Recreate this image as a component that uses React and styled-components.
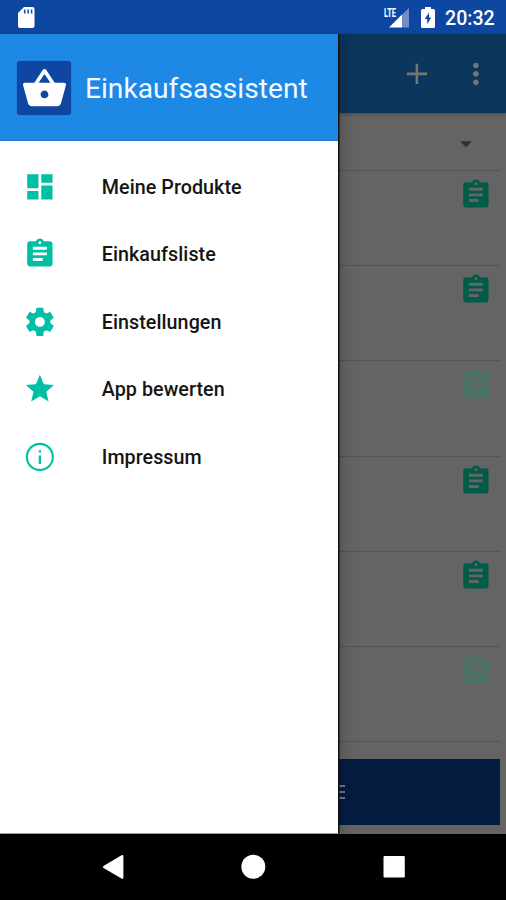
import React from "react";
import styled, { createGlobalStyle } from "styled-components";

const GlobalStyle = createGlobalStyle`
  *, *::before, *::after { box-sizing: border-box; }
  body { margin: 0; background: #000; font-family: Roboto, sans-serif; }
  svg { display: block; flex: none; }
`;

const Screen = styled.div`
  width: 506px;
  height: 900px;
  display: flex;
  flex-direction: column;
  overflow: hidden;
`;

const StatusBar = styled.header`
  height: 34px;
  flex: none;
  display: flex;
  align-items: center;
  padding: 0 11px 0 18px;
  background: #0d47a1;
  color: #fff;
`;

const StatusGroup = styled.div`
  display: flex;
  align-items: center;
  margin-left: auto;
`;

const Clock = styled.span`
  width: 50px;
  margin-left: 10px;
  padding-top: 3px;
  font-size: 19.6px;
  line-height: 24px;
  font-weight: 500;
  white-space: nowrap;
`;

const Stage = styled.main`
  position: relative;
  height: 799.5px;
  flex: none;
`;

const Page = styled.section`
  height: 100%;
  display: flex;
  flex-direction: column;
  background: #646464;
`;

const AppBar = styled.div`
  height: 79px;
  flex: none;
  display: flex;
  align-items: center;
  justify-content: flex-end;
  gap: 26px;
  padding-right: 13px;
  background: #0c365c;
  color: #737577;
  box-shadow: 0 1px 4px rgba(0, 0, 0, 0.3);
`;

const FilterRow = styled.div`
  height: 58px;
  flex: none;
  display: flex;
  align-items: center;
  justify-content: flex-end;
  margin-right: 6px;
  padding: 4px 17px 0 0;
  border-bottom: 1px solid #535353;
  color: #303030;
`;

const ProductRow = styled.div`
  height: 95.2px;
  flex: none;
  display: flex;
  justify-content: flex-end;
  margin-right: 6px;
  padding: 7px 7px 0 0;
  border-bottom: 1px solid #535353;
  color: ${(p) => (p.$listed ? "#005c48" : "#4a7267")};
`;

const ActionButton = styled.div`
  height: 66.5px;
  flex: none;
  display: flex;
  align-items: center;
  margin: 16.5px 6px 0;
  padding-left: 317px;
  background: #051c41;
  color: #727982;
`;

const Drawer = styled.aside`
  position: absolute;
  top: 0;
  left: 0;
  width: 338px;
  height: 100%;
  background: #fff;
  box-shadow: 1.5px 0 0 #111, 2px 0 14px rgba(0, 0, 0, 0.28);
  clip-path: inset(0 -30px 0 0);
`;

const DrawerHeader = styled.div`
  height: 107px;
  display: flex;
  align-items: center;
  gap: 14px;
  padding: 2px 0 0 17px;
  background: #1e88e5;
  border-bottom: 1px solid #1878d2;
`;

const AppLogo = styled.div`
  width: 54px;
  height: 54px;
  display: flex;
  align-items: center;
  justify-content: center;
  border-radius: 3px;
  background: #0d47a1;
  color: #fff;
  box-shadow: 0 0 1px #0d47a1;
`;

const Title = styled.h1`
  margin: 0;
  padding-top: 2px;
  font-size: 28.2px;
  line-height: 36px;
  font-weight: 400;
  color: #f1f8ff;
  white-space: nowrap;
`;

const Menu = styled.nav`
  padding-top: 12px;
`;

const MenuItem = styled.a`
  height: 67.5px;
  display: flex;
  align-items: center;
  gap: 45px;
  padding-left: 23px;
  color: #00bfa5;
`;

const MenuLabel = styled.span`
  padding-top: 2px;
  font-size: 19.7px;
  line-height: 26px;
  font-weight: 500;
  letter-spacing: 0.06px;
  color: #151515;
`;

const NavigationBar = styled.footer`
  flex: 1;
  display: flex;
  align-items: center;
  justify-content: space-between;
  padding: 0 96px;
  background: #000;
  color: #fff;
`;

const icons = {
  dashboard: "M3 13h8V3H3v10zm0 8h8v-6H3v6zm10 0h8V11h-8v10zm0-18v6h8V3h-8z",
  assignment:
    "M19 3h-4.18C14.4 1.84 13.3 1 12 1c-1.3 0-2.4.84-2.82 2H5c-1.1 0-2 .9-2 2v14c0 1.1.9 2 2 2h14c1.1 0 2-.9 2-2V5c0-1.1-.9-2-2-2zm-7 0c.55 0 1 .45 1 1s-.45 1-1 1-1-.45-1-1 .45-1 1-1zm2 14H7v-2h7v2zm3-4H7v-2h10v2zm0-4H7V7h10v2z",
  settings:
    "M19.43 12.98c.04-.32.07-.64.07-.98s-.03-.66-.07-.98l2.11-1.65c.19-.15.24-.42.12-.64l-2-3.46c-.12-.22-.39-.3-.61-.22l-2.49 1c-.52-.4-1.08-.73-1.69-.98l-.38-2.65C14.46 2.18 14.25 2 14 2h-4c-.25 0-.46.18-.49.42l-.38 2.65c-.61.25-1.17.59-1.69.98l-2.49-1c-.23-.09-.49 0-.61.22l-2 3.46c-.13.22-.07.49.12.64l2.11 1.65c-.04.32-.07.65-.07.98s.03.66.07.98l-2.11 1.65c-.19.15-.24.42-.12.64l2 3.46c.12.22.39.3.61.22l2.49-1c.52.4 1.08.73 1.69.98l.38 2.65c.03.24.24.42.49.42h4c.25 0 .46-.18.49-.42l.38-2.65c.61-.25 1.17-.59 1.69-.98l2.49 1c.23.09.49 0 .61-.22l2-3.46c.12-.22.07-.49-.12-.64l-2.11-1.65zM12 15.5c-1.93 0-3.5-1.57-3.5-3.5s1.57-3.5 3.5-3.5 3.5 1.57 3.5 3.5-1.57 3.5-3.5 3.5z",
  star: "M12 17.27L18.18 21l-1.64-7.03L22 9.24l-7.19-.61L12 2 9.19 8.63 2 9.24l5.46 4.73L5.82 21z",
  info: "M11.200 17h1.600v-6h-1.600zM12 2C6.480 2 2 6.480 2 12s4.480 10 10 10 10-4.480 10-10S17.520 2 12 2zm0 18.500c-4.690 0-8.500-3.810-8.500-8.500s3.810-8.500 8.500-8.500 8.500 3.810 8.500 8.500-3.810 8.500-8.500 8.500zM11.200 8.900h1.600V7.200h-1.600z",
  basket:
    "M17.21 9l-4.38-6.56c-.19-.28-.51-.42-.83-.42-.32 0-.64.14-.83.43L6.79 9H2c-.55 0-1 .45-1 1 0 .09.01.18.04.27l2.54 9.27c.23.84 1 1.46 1.92 1.46h13c.92 0 1.69-.62 1.93-1.46l2.54-9.27L23 10c0-.55-.45-1-1-1h-4.79zM9 9l3-4.4L15 9H9zm3 8c-1.1 0-2-.9-2-2s.9-2 2-2 2 .9 2 2-.9 2-2 2z",
  plus: "M19.200 12.900h-6.300v6.300h-1.800v-6.300H4.800v-1.800h6.300V4.800h1.800v6.300h6.300z",
  more: "M12 8c1.1 0 2-.9 2-2s-.9-2-2-2-2 .9-2 2 .9 2 2 2zm0 2c-1.1 0-2 .9-2 2s.9 2 2 2 2-.9 2-2-.9-2-2-2zm0 6c-1.1 0-2 .9-2 2s.9 2 2 2 2-.9 2-2-.9-2-2-2z",
};

function Icon({ name, size = 33.75 }) {
  return (
    <svg width={size} height={size} viewBox="0 0 24 24" fill="currentColor" aria-hidden="true">
      <path d={icons[name]} />
    </svg>
  );
}

const SdCard = () => (
  <svg width="17" height="21" viewBox="0 0 17 21">
    <path fill="#fff" d="M6 0h8.500a2 2 0 0 1 2 2v17a2 2 0 0 1-2 2H2a2 2 0 0 1-2-2V6z" />
    <path stroke="#0d47a1" strokeWidth="1.500" d="M6.700 2.500v4M10.200 2.500v4M13.600 2.500v4" />
  </svg>
);

const SignalMark = styled.div`
  display: flex;
  position: relative;
  width: 25px;
  height: 21px;
  justify-content: flex-end;
`;

const NetworkLabel = styled.span`
  position: absolute;
  left: 0;
  top: -1px;
  font-size: 12.5px;
  line-height: 13px;
  font-weight: 700;
  transform: scaleX(0.6);
  transform-origin: left;
`;

const Signal = () => (
  <SignalMark>
    <NetworkLabel>LTE</NetworkLabel>
    <svg width="20" height="21" viewBox="0 0 20 21">
      <path fill="#6e8fc6" d="M13 7.500L20 1v19.500h-7z" />
      <path fill="#fff" d="M0 20.500L13 7.500v13z" />
    </svg>
  </SignalMark>
);

const BatteryBox = styled.div`
  margin-left: 12px;
`;

const Battery = () => (
  <BatteryBox>
    <svg width="14" height="21" viewBox="0 0 14 21">
      <path fill="#fff" d="M4 0h6v2h2.500Q14 2 14 3.500v16Q14 21 12.500 21h-11Q0 21 0 19.500v-16Q0 2 1.500 2H4z" />
      <path fill="#0d47a1" d="M8 5.500L3.800 12h2.400v5.200L10.200 10.400H8z" />
    </svg>
  </BatteryBox>
);

const menu = [
  ["dashboard", "Meine Produkte"],
  ["assignment", "Einkaufsliste"],
  ["settings", "Einstellungen"],
  ["star", "App bewerten"],
  ["info", "Impressum"],
];

const products = [true, true, false, true, true, false];

export default function App() {
  return (
    <Screen>
      <GlobalStyle />
      <StatusBar>
        <SdCard />
        <StatusGroup>
          <Signal />
          <Battery />
          <Clock>20:32</Clock>
        </StatusGroup>
      </StatusBar>
      <Stage>
        <Page>
          <AppBar>
            <Icon name="plus" />
            <Icon name="more" />
          </AppBar>
          <FilterRow>
            <svg width="34" height="34" viewBox="0 0 24 24" fill="currentColor">
              <path d="M7.800 10h8.400L12 14.500z" />
            </svg>
          </FilterRow>
          {products.map((listed, i) => (
            <ProductRow key={i} $listed={listed}>
              <Icon name="assignment" />
            </ProductRow>
          ))}
          <ActionButton>
            <svg width="22" height="18" viewBox="0 0 22 18" stroke="currentColor" strokeWidth="2.200">
              <path d="M0 3h22M0 9h22M0 15h22" />
            </svg>
          </ActionButton>
        </Page>
        <Drawer>
          <DrawerHeader>
            <AppLogo>
              <Icon name="basket" size={47} />
            </AppLogo>
            <Title>Einkaufsassistent</Title>
          </DrawerHeader>
          <Menu>
            {menu.map(([icon, label]) => (
              <MenuItem key={label}>
                <Icon name={icon} />
                <MenuLabel>{label}</MenuLabel>
              </MenuItem>
            ))}
          </Menu>
        </Drawer>
      </Stage>
      <NavigationBar>
        <svg width="34" height="34" viewBox="0 0 34 34" fill="currentColor">
          <path d="M7.500 16.100L25.500 5.300Q27.400 4.400 27.400 6.500V27.500Q27.400 29.400 25.500 28.400L7.500 18Q6 17 7.500 16.100z" />
        </svg>
        <svg width="34" height="34" viewBox="0 0 34 34" fill="currentColor">
          <circle cx="17.300" cy="16.800" r="12" />
        </svg>
        <svg width="34" height="34" viewBox="0 0 34 34" fill="currentColor">
          <rect x="7.500" y="6" width="21.300" height="21.500" rx="1" />
        </svg>
      </NavigationBar>
    </Screen>
  );
}
